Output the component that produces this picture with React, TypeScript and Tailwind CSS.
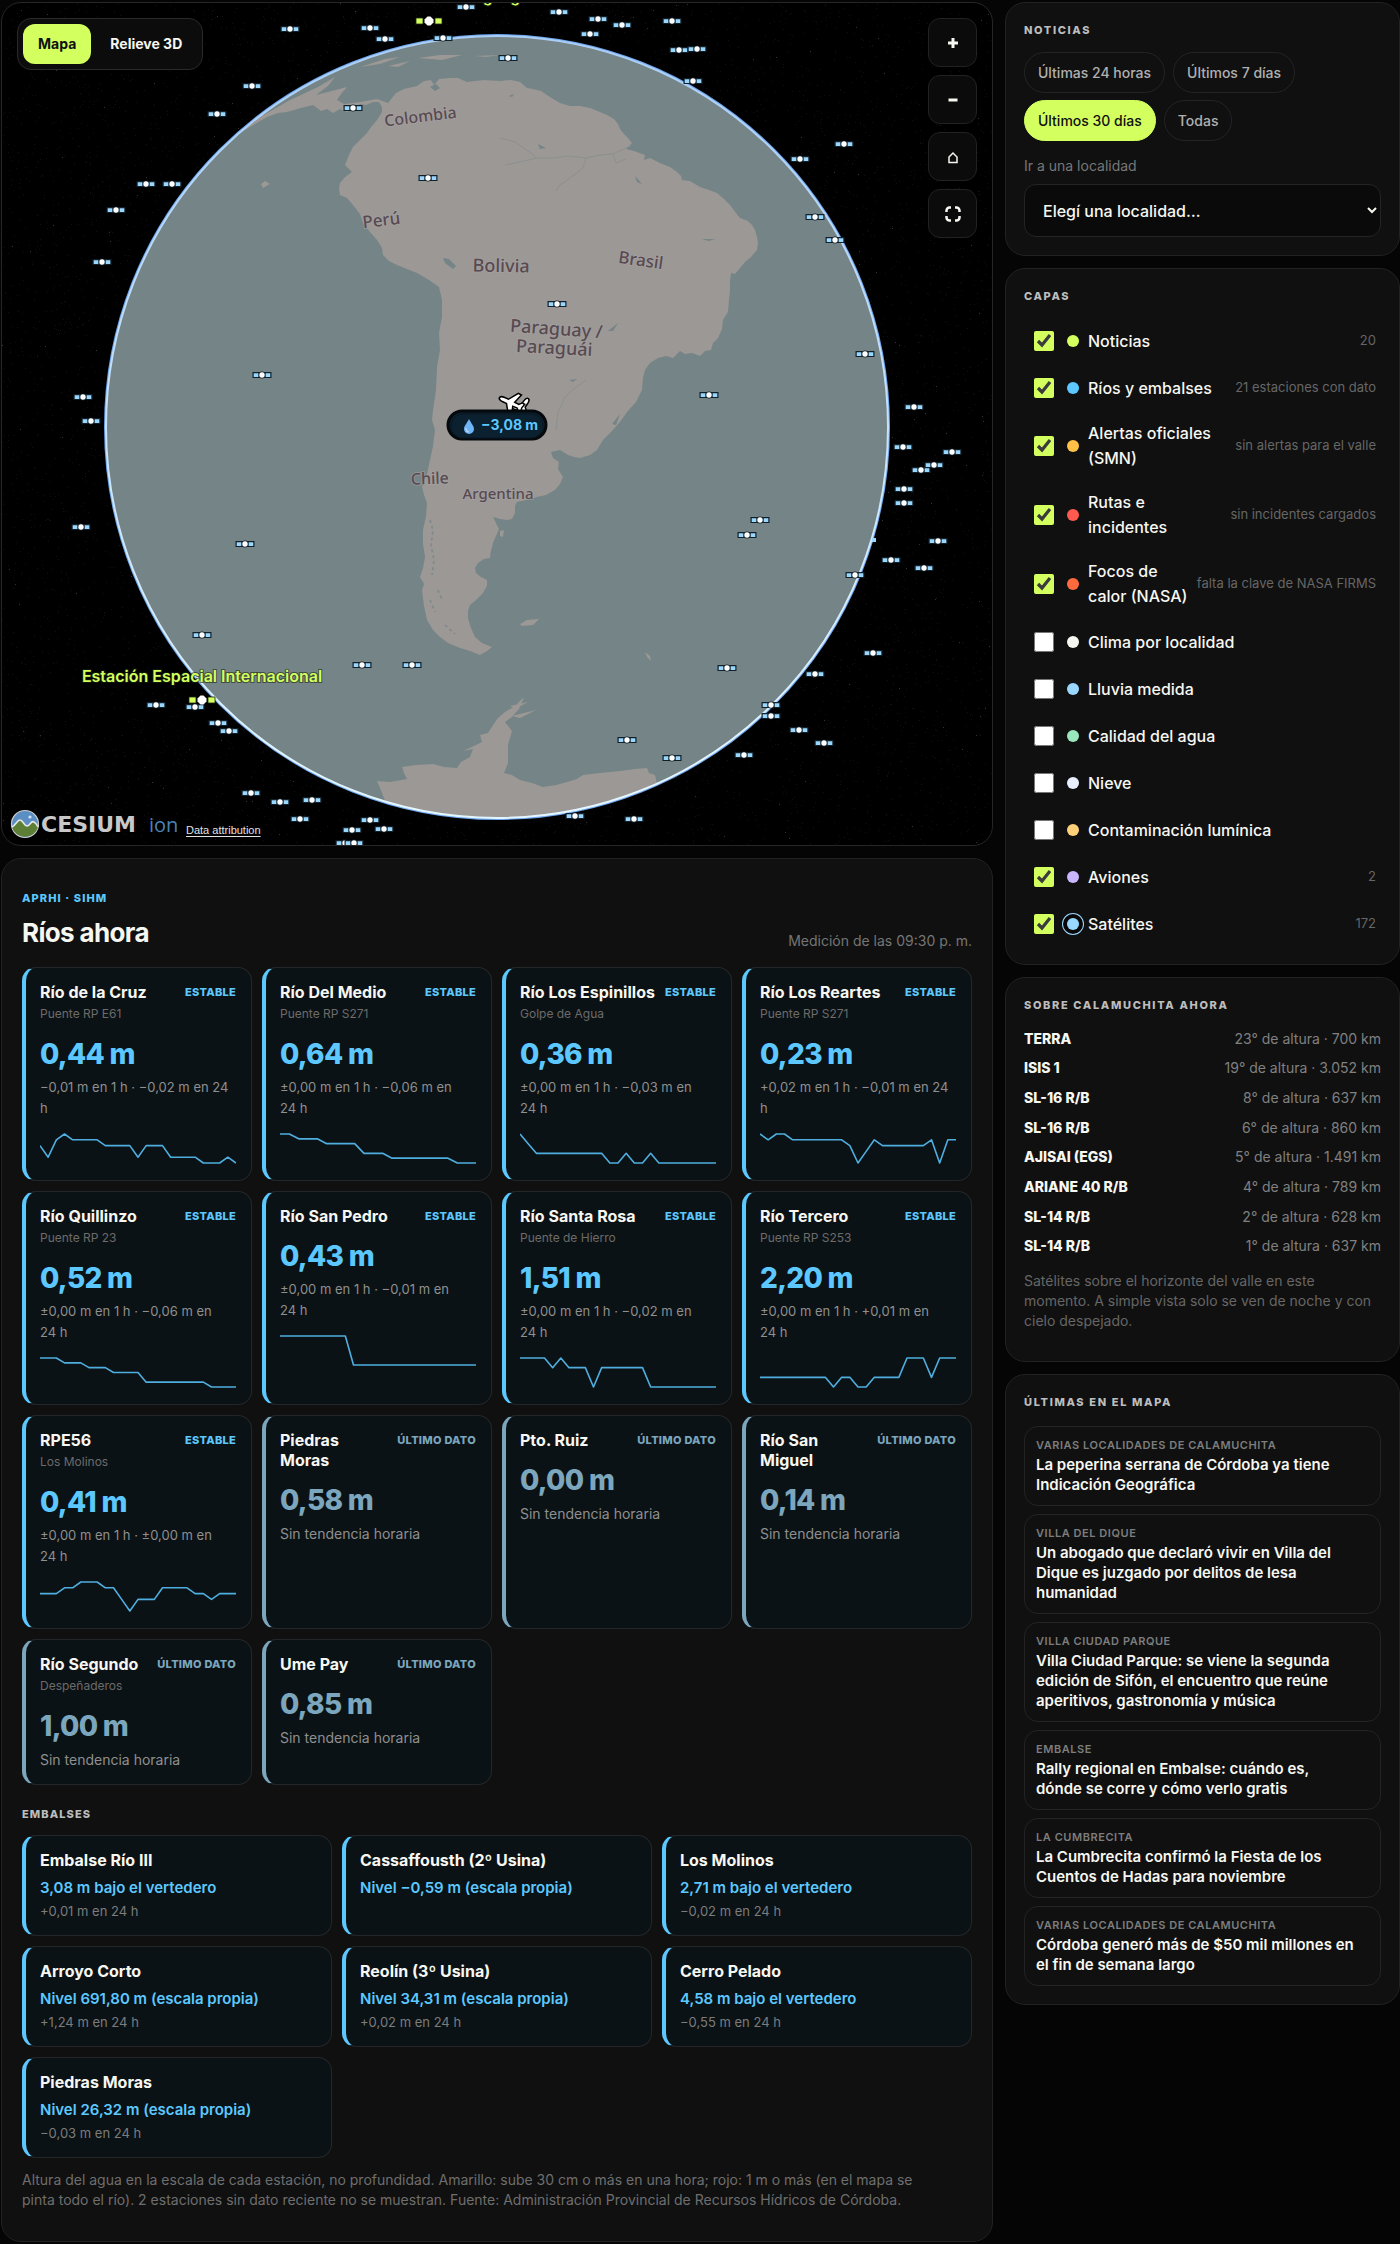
import { useState } from 'react'
import clsx from 'clsx'

const PERIODS = ['Últimas 24 horas', 'Últimos 7 días', 'Últimos 30 días', 'Todas']

const LAYERS = [
  { name: 'Noticias', dot: 'bg-[#d3ff5f]', note: '20', on: true },
  { name: 'Ríos y embalses', dot: 'bg-[#5cc8ff]', note: '21 estaciones con dato', on: true },
  { name: 'Alertas oficiales\n(SMN)', dot: 'bg-[#ffc247]', note: 'sin alertas para el valle', on: true },
  { name: 'Rutas e\nincidentes', dot: 'bg-[#ff5a4f]', note: 'sin incidentes cargados', on: true },
  { name: 'Focos de\ncalor (NASA)', dot: 'bg-[#ff6b3d]', note: 'falta la clave de NASA FIRMS', on: true },
  { name: 'Clima por localidad', dot: 'bg-[#f7f7f2]', note: '', on: false },
  { name: 'Lluvia medida', dot: 'bg-[#9ad7ff]', note: '', on: false },
  { name: 'Calidad del agua', dot: 'bg-[#9be7bd]', note: '', on: false },
  { name: 'Nieve', dot: 'bg-[#e8f0ff]', note: '', on: false },
  { name: 'Contaminación lumínica', dot: 'bg-[#ffd07a]', note: '', on: false },
  { name: 'Aviones', dot: 'bg-[#c9b6ff]', note: '2', on: true },
  { name: 'Satélites', dot: 'bg-[#9ad7ff] ring-1 ring-[#9ad7ff] ring-offset-4 ring-offset-[#080808]', note: '172', on: true },
]

const OVERHEAD = [
  ['TERRA', '23° de altura · 700 km'],
  ['ISIS 1', '19° de altura · 3.052 km'],
  ['SL-16 R/B', '8° de altura · 637 km'],
  ['SL-16 R/B', '6° de altura · 860 km'],
  ['AJISAI (EGS)', '5° de altura · 1.491 km'],
  ['ARIANE 40 R/B', '4° de altura · 789 km'],
  ['SL-14 R/B', '2° de altura · 628 km'],
  ['SL-14 R/B', '1° de altura · 637 km'],
]

const NEWS = [
  ['Varias localidades de Calamuchita', 'La peperina serrana de Córdoba ya tiene\nIndicación Geográfica'],
  ['Villa del Dique', 'Un abogado que declaró vivir en Villa del\nDique es juzgado por delitos de lesa\nhumanidad'],
  ['Villa Ciudad Parque', 'Villa Ciudad Parque: se viene la segunda\nedición de Sifón, el encuentro que reúne\naperitivos, gastronomía y música'],
  ['Embalse', 'Rally regional en Embalse: cuándo es,\ndónde se corre y cómo verlo gratis'],
  ['La Cumbrecita', 'La Cumbrecita confirmó la Fiesta de los\nCuentos de Hadas para noviembre'],
  ['Varias localidades de Calamuchita', 'Córdoba generó más de $50 mil millones en\nel fin de semana largo'],
]

type River = { name: string; place?: string; level: string; trend?: string; series?: number[] }

const RIVERS: River[] = [
  { name: 'Río de la Cruz', place: 'Puente RP E61', level: '0,44', trend: '−0,01 m en 1 h · −0,02 m en 24\nh', series: [2, 4, 1, 0, 1, 1, 1, 1, 2, 2, 2, 2, 4, 2, 2, 2, 4, 4, 4, 4, 5, 5, 5, 4, 5] },
  { name: 'Río Del Medio', place: 'Puente RP S271', level: '0,64', trend: '±0,00 m en 1 h · −0,06 m en\n24 h', series: [0, 0, 1, 1, 1, 2, 2, 2, 2, 4, 4, 4, 5, 5, 5, 5, 5, 5, 5, 6, 6, 6] },
  { name: 'Río Los Espinillos', place: 'Golpe de Agua', level: '0,36', trend: '±0,00 m en 1 h · −0,03 m en\n24 h', series: [0, 1, 2, 2, 2, 2, 2, 2, 2, 2, 2, 3, 3, 2, 3, 3, 2, 3, 3, 3, 3, 3, 3, 3, 3] },
  { name: 'Río Los Reartes', place: 'Puente RP S271', level: '0,23', trend: '+0,02 m en 1 h · −0,01 m en 24\nh', series: [0, 1, 0, 0, 1, 1, 1, 1, 1, 1, 1, 2, 5, 3, 1, 2, 2, 2, 2, 2, 2, 1, 5, 1, 1] },
  { name: 'Río Quillinzo', place: 'Puente RP 23', level: '0,52', trend: '±0,00 m en 1 h · −0,06 m en\n24 h', series: [0, 0, 0, 1, 1, 1, 2, 2, 2, 3, 3, 3, 3, 5, 5, 5, 5, 5, 5, 5, 5, 6, 6, 6, 6] },
  { name: 'Río San Pedro', level: '0,43', trend: '±0,00 m en 1 h · −0,01 m en\n24 h', series: [0, 0, 0, 0, 0, 0, 0, 0, 0, 1, 1, 1, 1, 1, 1, 1, 1, 1, 1, 1, 1, 1, 1, 1, 1] },
  { name: 'Río Santa Rosa', place: 'Puente de Hierro', level: '1,51', trend: '±0,00 m en 1 h · −0,02 m en\n24 h', series: [0, 0, 0, 0, 1, 0, 1, 1, 1, 3, 1, 1, 1, 1, 1, 1, 3, 3, 3, 3, 3, 3, 3, 3, 3] },
  { name: 'Río Tercero', place: 'Puente RP S253', level: '2,20', trend: '±0,00 m en 1 h · +0,01 m en\n24 h', series: [2, 2, 2, 2, 2, 2, 2, 2, 2, 3, 2, 2, 3, 3, 2, 2, 2, 2, 0, 0, 0, 2, 0, 0, 0] },
  { name: 'RPE56', place: 'Los Molinos', level: '0,41', trend: '±0,00 m en 1 h · ±0,00 m en\n24 h', series: [2, 2, 2, 1, 1, 0, 0, 0, 1, 1, 3, 5, 3, 3, 3, 1, 1, 1, 1, 2, 2, 3, 2, 2, 2] },
  { name: 'Piedras\nMoras', level: '0,58' },
  { name: 'Pto. Ruiz', level: '0,00' },
  { name: 'Río San\nMiguel', level: '0,14' },
  { name: 'Río Segundo', place: 'Despeñaderos', level: '1,00' },
  { name: 'Ume Pay', level: '0,85' },
]

const RESERVOIRS = [
  ['Embalse Río III', '3,08 m bajo el vertedero', '+0,01 m en 24 h'],
  ['Cassaffousth (2º Usina)', 'Nivel −0,59 m (escala propia)', ''],
  ['Los Molinos', '2,71 m bajo el vertedero', '−0,02 m en 24 h'],
  ['Arroyo Corto', 'Nivel 691,80 m (escala propia)', '+1,24 m en 24 h'],
  ['Reolín (3º Usina)', 'Nivel 34,31 m (escala propia)', '+0,02 m en 24 h'],
  ['Cerro Pelado', '4,58 m bajo el vertedero', '−0,55 m en 24 h'],
  ['Piedras Moras', 'Nivel 26,32 m (escala propia)', '−0,03 m en 24 h'],
]

const SATELLITES = [
  [290, 29], [370, 28], [385, 39], [466, 7], [443, 38], [252, 86], [217, 114], [146, 184], [172, 184],
  [116, 210], [102, 262], [353, 108], [428, 178], [262, 375], [83, 397], [91, 421], [508, 58], [559, 12],
  [598, 19], [622, 25], [590, 34], [672, 21], [679, 50], [697, 49], [693, 81], [844, 144], [800, 159],
  [815, 217], [835, 240], [557, 304], [865, 354], [709, 395], [914, 407], [81, 527], [245, 544], [202, 635],
  [362, 665], [412, 665], [156, 705], [195, 707], [218, 723], [229, 731], [251, 793], [280, 802], [312, 800],
  [300, 819], [352, 830], [370, 820], [384, 829], [345, 843], [354, 843], [903, 447], [952, 452], [934, 465],
  [921, 470], [904, 489], [904, 503], [760, 520], [747, 535], [938, 541], [891, 560], [924, 568], [855, 575],
  [873, 653], [727, 668], [815, 674], [771, 705], [771, 716], [799, 730], [824, 743], [627, 740], [672, 758],
  [744, 755], [575, 816], [634, 819],
]

const COUNTRIES = [
  { name: 'Colombia', x: 421, y: 122, size: 16, turn: -7 },
  { name: 'Perú', x: 382, y: 226, size: 17, turn: -7 },
  { name: 'Bolivia', x: 501, y: 272, size: 18, turn: 1 },
  { name: 'Brasil', x: 640, y: 266, size: 17, turn: 8 },
  { name: 'Paraguay /', x: 556, y: 335, size: 18, turn: 4 },
  { name: 'Paraguái', x: 554, y: 354, size: 18, turn: 3 },
  { name: 'Chile', x: 430, y: 484, size: 16, turn: -2 },
  { name: 'Argentina', x: 498, y: 499, size: 15, turn: 0 },
]

const SOUTH_AMERICA =
  'M240 133L262 116 290 100 318 87 335 77 328 86 316 95 347 87 341 94 337 100 344 104 360 102 377 99 388 103 396 93 404 89 417 86 424 81 431 80 434 85 439 79 450 78 458 78 467 82 484 80 500 81 511 80 520 82 527 88 533 89 541 91 550 97 560 103 570 106 580 106 590 108 600 112 607 115 614 119 618 124 620 129 623 133 628 138 632 143 626 149 634 151 645 155 644 160 650 158 660 163 670 167 677 172 681 176 682 180 690 181 700 187 709 190 717 193 724 199 730 205 736 213 740 218 748 221 752 225 755 230 757 237 758 243 757 250 751 257 745 262 740 268 735 274 731 273 730 282 730 291 729 300 728 312 723 320 722 329 718 338 713 343 711 350 705 351 700 356 692 353 685 354 680 351 673 358 666 356 658 358 650 363 645 370 643 378 642 390 636 402 627 412 620 422 611 432 603 440 597 450 590 455 580 458 574 457 568 455 560 450 551 452 553 458 559 462 558 469 563 477 560 484 555 490 546 495 537 497 526 500 517 502 515 506 515 513 512 519 507 520 500 519 493 517 496 523 499 529 496 536 493 543 491 551 490 558 484 559 478 563 475 568 476 573 481 577 487 580 487 586 483 593 476 600 470 605 468 611 468 618 471 628 475 637 482 643 492 647 487 651 480 655 470 651 460 648 448 643 440 637 433 630 427 620 424 606 422 590 424 584 420 577 423 568 425 557 423 544 423 530 426 516 427 503 424 495 422 487 427 474 430 460 433 446 435 430 432 420 433 410 436 390 437 367 440 350 439 333 442 317 442 300 439 287 429 280 417 273 407 269 397 265 389 261 383 255 382 248 377 240 370 232 363 223 360 214 353 205 347 198 340 195 339 189 340 183 345 177 352 172 345 165 349 155 353 147 361 139 367 133 371 127 377 120 382 112 382 107 379 102 373 102 366 105 360 104 355 108 347 112 340 109 333 113 327 109 321 111 313 105 301 108 287 112 278 113 267 117 255 124Z'

const ANTARCTICA =
  'M377 781L390 782 407 779 404 773 402 767 416 765 433 764 444 767 457 768 461 762 470 757 473 749 463 751 476 745 482 742 480 735 488 733 493 725 498 718 505 712 515 706 524 697 519 709 512 717 505 722 512 731 508 745 508 763 504 773 512 775 520 780 532 783 543 787 556 785 567 782 577 779 583 775 600 773 620 771 635 769 647 768 649 773 655 775 670 840 400 840 382 793Z'

const RIVER_LINES =
  'M500 138L515 142 528 151 537 158 552 158 568 156 586 158 600 155 613 154 624 149 631 145M505 165L520 162 537 158M586 158L583 168 570 178 560 185 556 191M613 154L616 163 626 159M586 380L575 388 565 397 558 412 556 430'

// Cheap deterministic noise for the star field
function starField(count: number, seed: number) {
  let s = seed
  const next = () => (s = (s * 16807) % 2147483647) / 2147483647
  let d = ''
  for (let i = 0; i < count; i++) {
    d += `M${Math.round(next() * 990)} ${Math.round(next() * 842)}h1`
  }
  return d
}

const FAINT_STARS = starField(9000, 7)
const BRIGHT_STARS = starField(300, 91)

function Satellite({ x, y, station }: { x: number; y: number; station?: boolean }) {
  return station ? (
    <g transform={`translate(${x} ${y})`}>
      <path d="M-13 -3h7v6h-7zM6 -3h7v6h-7z" fill="#d3ff5f" stroke="#1c2610" strokeWidth=".8" />
      <path d="M-1.5 -4.5h3l3 3v3l-3 3h-3l-3-3v-3z" fill="#fff" />
    </g>
  ) : (
    <g transform={`translate(${x} ${y})`}>
      <path d="M-9.5 -3h19v6h-19z" fill="#12202a" />
      <circle r="3.6" fill="#12202a" />
      <path d="M-8.3 -1.8h4.6v3.8h-4.6zM3.7 -1.8h4.6v3.8h-4.6z" fill="#9ad7ff" />
      <circle r="2.7" fill="#fff" />
    </g>
  )
}

function Plane({ x, y, turn }: { x: number; y: number; turn: number }) {
  return (
    <path
      transform={`translate(${x} ${y}) rotate(${turn})`}
      d="M0 -12C1 -12 1.6 -10 1.6 -8L1.6 -3.5 11 3 11 5 1.6 2 1.2 8 4 10.5V12L0 11 -4 12V10.5L-1.2 8 -1.6 2 -11 5V3L-1.6 -3.5V-8C-1.6 -10 -1 -12 0 -12Z"
      fill="#fff"
      stroke="#000"
      strokeWidth="3"
      paintOrder="stroke"
    />
  )
}

function Globe() {
  return (
    <svg viewBox="2 3 990 842" preserveAspectRatio="xMidYMid slice" className="absolute inset-0 size-full" aria-label="Globo">
      <defs>
        <clipPath id="disc">
          <circle cx="497" cy="427" r="391" />
        </clipPath>
        <linearGradient id="rim" x1="0" y1="0" x2="0" y2="1">
          <stop offset="0" stopColor="#a9cdf5" />
          <stop offset="1" stopColor="#e4f6ff" />
        </linearGradient>
      </defs>
      <g transform="translate(2 3)" shapeRendering="crispEdges">
        <path d={FAINT_STARS} stroke="#101010" />
        <path d={BRIGHT_STARS} stroke="#343434" />
      </g>
      <circle cx="497" cy="427" r="391" fill="#758486" />
      <g clipPath="url(#disc)">
        <path d={SOUTH_AMERICA} fill="#9b9895" />
        <path d={ANTARCTICA} fill="#9b9895" />
        <path
          d="M360 67L385 59 400 57 380 64ZM388 66L410 61 398 67ZM418 58L440 55 462 55 442 60ZM474 56L500 55 486 57ZM520 624L527 620 539 619 533 625 522 626ZM645 652L650 656 651 661 647 657ZM261 184L265 181 270 184 263 188ZM510 706L528 702 515 709ZM512 716L536 710 520 718ZM500 531L504 530 503 537 500 536Z"
          fill="#9b9895"
        />
        <path d={RIVER_LINES} fill="none" stroke="#8c9090" strokeWidth="1" />
        <path
          d="M443 258L449 259 456 266 453 269 445 263ZM430 87L436 84 440 88 435 91ZM538 144L546 148 540 149ZM635 176L642 184 637 182ZM509 96L514 94 512 97ZM608 331L618 323 613 331ZM569 380L577 379 573 382ZM612 424L620 414 616 425ZM702 239L715 239 709 241Z"
          fill="#758486"
        />
        <path d="M430 520L433 530 431 545 434 560 432 575M438 590L442 600M445 625L455 634M430 600L435 612" fill="none" stroke="#7d8889" strokeWidth="1.5" strokeDasharray="3 3" />
      </g>
      <circle cx="497" cy="427" r="392" fill="none" stroke="#6ba4ec" strokeWidth="2" />
      <circle cx="497" cy="427" r="391" fill="none" stroke="url(#rim)" strokeWidth="2" />

      <g className="font-['Noto_Sans',sans-serif] font-medium" fill="#574a51" stroke="#aaa3a5" strokeWidth="2" strokeOpacity=".5" paintOrder="stroke" textAnchor="middle">
        {COUNTRIES.map(c => (
          <text key={c.name} x={c.x} y={c.y} fontSize={c.size} transform={`rotate(${c.turn} ${c.x} ${c.y})`}>
            {c.name}
          </text>
        ))}
      </g>

      {SATELLITES.map(([x, y], i) => (
        <Satellite key={i} x={x} y={y} />
      ))}
      <path d="M872 538h4v4h-4z" fill="#9ad7ff" />
      <Satellite x={429} y={21} station />
      <Satellite x={202} y={700} station />

      <g fill="#d3ff5f" stroke="#1c2610" strokeWidth="2" strokeOpacity=".6" paintOrder="stroke" className="font-semibold">
        <text x="202" y="682" fontSize="16" textAnchor="middle">Estación Espacial Internacional</text>
        <text x="520" y="2" fontSize="15" textAnchor="end">Tiangong</text>
      </g>

      <Plane x={521} y={409} turn={35} />
      <Plane x={511} y={403} turn={-65} />
      <rect x="448" y="411" width="98" height="28" rx="14" fill="#0b1e2a" stroke="#05090c" strokeWidth="3" />
      <rect x="451" y="414" width="92" height="24" rx="12" fill="#0b2130" stroke="#081722" />
      <path d="M469 419C471 423 474 426 474 429A5 5 0 0 1 464 429C464 426 467 423 469 419Z" fill="#6fb4f5" />
      <path d="M466 428A3 4 0 0 0 469 432" fill="none" stroke="#b9dcff" strokeWidth="1.2" />
      <text x="481" y="430" fontSize="14" className="font-bold" fill="#5cc8ff">−3,08 m</text>
    </svg>
  )
}

function CesiumCredit() {
  return (
    <div className="absolute bottom-1.5 left-2 flex items-end gap-1.5">
      <svg width="170" height="30" viewBox="0 0 170 30" aria-label="Cesium ion">
        <circle cx="15" cy="15" r="13.5" fill="#5b8fc4" stroke="#c9c9c9" strokeWidth="1.2" />
        <path d="M2 18C6 16 7 11 10 11S14 17 17 17 21 11 24 13C26 14 27 16 28 18A13.5 13.5 0 0 1 2 18Z" fill="#5d7f35" />
        <path d="M2 18C6 16 7 11 10 11S14 17 17 17 21 11 24 13C26 14 27 16 28 18" fill="none" stroke="#e6e6e6" strokeWidth="1.6" />
        <circle cx="20" cy="8" r="1.6" fill="#cfe3f7" />
        <text x="31" y="23" fontSize="22" className="font-['DejaVu_Sans',sans-serif] font-bold" fill="#c8c8c8">CESIUM</text>
        <text x="139" y="23" fontSize="20" className="font-['Open_Sans',sans-serif]" fill="#4c83b8">ion</text>
      </svg>
      <a href="#attribution" className="font-['Liberation_Sans',sans-serif] text-[11px] leading-[17px] text-[#e2e2e2] underline underline-offset-2">
        Data attribution
      </a>
    </div>
  )
}

const CONTROLS = [
  { label: 'Acercar', icon: <path d="M12 7v10M7 12h10" strokeWidth="3" /> },
  { label: 'Alejar', icon: <path d="M7.5 12h9" strokeWidth="3" /> },
  { label: 'Inicio', icon: <path d="M8 17.5V12L12 8 16 12V17.5Z" strokeWidth="1.5" /> },
  {
    label: 'Pantalla completa',
    icon: <path d="M5.5 10V8.5A3 3 0 0 1 8.5 5.5H10M14 5.5H15.5A3 3 0 0 1 18.5 8.5V10M18.5 14V15.5A3 3 0 0 1 15.5 18.5H14M10 18.5H8.5A3 3 0 0 1 5.5 15.5V14" strokeWidth="2.5" />,
  },
]

function MapPanel() {
  const [view, setView] = useState('Mapa')
  return (
    <section className="relative h-[844px] overflow-hidden rounded-[20px] border border-[#262626] bg-black">
      <Globe />
      <div className="absolute top-[15px] left-[15px] flex gap-1 rounded-[14px] border border-[#2a2a2a] bg-[#0c0c0c] p-[5px]">
        {['Mapa', 'Relieve 3D'].map(v => (
          <button
            key={v}
            onClick={() => setView(v)}
            className={clsx('h-10 rounded-xl px-[15px] text-sm font-bold', v === view ? 'bg-[#d3ff5f] text-[#101010]' : 'text-[#f7f7f2]')}
          >
            {v}
          </button>
        ))}
      </div>
      <div className="absolute top-[15px] right-[15px] flex flex-col gap-2">
        {CONTROLS.map(c => (
          <button key={c.label} aria-label={c.label} className="grid size-[49px] place-items-center rounded-xl border border-[#222] bg-[#0b0b0b] text-[#f7f7f2]">
            <svg width="24" height="24" viewBox="0 0 24 24" fill="none" stroke="currentColor">
              {c.icon}
            </svg>
          </button>
        ))}
      </div>
      <CesiumCredit />
    </section>
  )
}

function Sparkline({ series }: { series: number[] }) {
  const max = Math.max(...series)
  const points = series.map((v, i) => `${(i * 196) / (series.length - 1)},${3 + (v * 29) / max}`).join(' ')
  return (
    <svg viewBox="0 0 196 35" preserveAspectRatio="none" className="mt-3 h-[35px] w-full">
      <polyline points={points} fill="none" stroke="#4faee0" strokeWidth="1.6" strokeLinejoin="round" />
    </svg>
  )
}

function RiverCard({ river }: { river: River }) {
  const live = Boolean(river.series)
  return (
    <article className={clsx('rounded-[14px] border border-l-4 border-[#242729] bg-[#0b1215] py-3.5 pr-[15px] pl-3.5', live ? 'border-l-[#5cc8ff]' : 'border-l-[#7ba6bd]')}>
      <div className="flex items-start justify-between gap-1">
        <h3 className="text-base leading-5 font-bold whitespace-pre text-[#f7f7f2]">{river.name}</h3>
        <span className={clsx('text-[11px] leading-5 font-extrabold tracking-wide whitespace-nowrap', live ? 'text-[#5cc8ff]' : 'text-[#7ba6bd]')}>
          {live ? 'ESTABLE' : 'ÚLTIMO DATO'}
        </span>
      </div>
      {river.place && <p className="mt-0.5 text-xs leading-5 text-[#6b6b6b]">{river.place}</p>}
      <p className={clsx('mt-4 text-[28px] leading-7 font-extrabold tracking-tight', live ? 'text-[#5cc8ff]' : 'text-[#7ba6bd]')}>{river.level} m</p>
      {river.trend ? (
        <p className="mt-[9px] text-[13px] leading-[21px] whitespace-pre-line text-[#8f8f8f]">{river.trend}</p>
      ) : (
        <p className="mt-[9px] text-sm leading-[21px] text-[#8f8f8f]">Sin tendencia horaria</p>
      )}
      {river.series && <Sparkline series={river.series} />}
    </article>
  )
}

function RiversPanel() {
  return (
    <section className="rounded-[20px] border border-[#222] bg-[#101010] px-5 pt-[30px] pb-[31px]">
      <p className="text-[11px] leading-[18px] font-extrabold tracking-widest text-[#5cc8ff]">APRHI · SIHM</p>
      <div className="mt-3 mb-5 flex items-end justify-between">
        <h2 className="text-[26px] leading-7 font-bold tracking-tight text-[#f7f7f2]">Ríos ahora</h2>
        <p className="text-sm leading-3 text-[#757575]">Medición de las 09:30 p. m.</p>
      </div>
      <div className="grid grid-cols-4 gap-2.5">
        {RIVERS.map(r => (
          <RiverCard key={r.name} river={r} />
        ))}
      </div>
      <h3 className="mt-5 mb-3 text-[11px] leading-[18px] font-extrabold tracking-widest text-[#bdbdbd]">EMBALSES</h3>
      <div className="grid grid-cols-3 gap-2.5">
        {RESERVOIRS.map(([name, level, change]) => (
          <article key={name} className="rounded-[14px] border border-l-4 border-[#242729] border-l-[#5cc8ff] bg-[#0b1215] px-3.5 py-3.5">
            <h4 className="text-base leading-5 font-bold text-[#f7f7f2]">{name}</h4>
            <p className="mt-2 text-[15px] leading-5 font-semibold text-[#5cc8ff]">{level}</p>
            {change && <p className="mt-1 text-[13px] leading-[19px] text-[#7c7c7c]">{change}</p>}
          </article>
        ))}
      </div>
      <p className="mt-3 text-sm leading-5 text-[#6e6e6e]">
        Altura del agua en la escala de cada estación, no profundidad. Amarillo: sube 30 cm o más en una hora; rojo: 1 m o más (en el mapa se
        <br />
        pinta todo el río). 2 estaciones sin dato reciente no se muestran. Fuente: Administración Provincial de Recursos Hídricos de Córdoba.
      </p>
    </section>
  )
}

function SidePanel({ title, children }: { title: string; children: React.ReactNode }) {
  return (
    <section className="rounded-[20px] border border-[#222] bg-[#101010] p-[18px]">
      <h2 className="text-[11px] leading-[18px] font-extrabold tracking-[0.15em] text-[#bdbdbd]">{title}</h2>
      {children}
    </section>
  )
}

export default function App() {
  const [period, setPeriod] = useState('Últimos 30 días')
  return (
    <div className="min-h-screen bg-[#050505] pt-0.5 pb-px pl-px font-[Inter,sans-serif] text-[#f7f7f2]">
      <div className="grid grid-cols-[minmax(0,1fr)_395px] items-start gap-3">
        <main className="flex flex-col gap-3">
          <MapPanel />
          <RiversPanel />
        </main>

        <aside className="flex flex-col gap-3">
          <SidePanel title="NOTICIAS">
            <div className="mt-[13px] flex flex-wrap gap-x-2 gap-y-[7px]">
              {PERIODS.map(p => (
                <button
                  key={p}
                  onClick={() => setPeriod(p)}
                  className={clsx(
                    'h-[41px] rounded-full border px-[13px] text-sm font-medium',
                    p === period ? 'border-[#d3ff5f] bg-[#d3ff5f] text-[#101010]' : 'border-[#242424] text-[#b0b0b0]'
                  )}
                >
                  {p}
                </button>
              ))}
            </div>
            <label htmlFor="town" className="mt-[15px] mb-2 block text-sm leading-5 text-[#777]">
              Ir a una localidad
            </label>
            <select id="town" className="h-[53px] w-full rounded-xl border border-[#242424] bg-[#0a0a0a] pl-3.5 text-base font-medium text-[#f7f7f2]">
              <option>Elegí una localidad…</option>
            </select>
          </SidePanel>

          <SidePanel title="CAPAS">
            <ul className="mt-3.5 flex flex-col gap-[3px]">
              {LAYERS.map(l => (
                <li key={l.name}>
                  <label className="flex min-h-11 items-center gap-[9px] py-2 pr-[5px] pl-2.5">
                    <input type="checkbox" defaultChecked={l.on} className="mr-1 size-5 shrink-0 accent-[#d3ff5f]" />
                    <span className={clsx('size-3 shrink-0 rounded-full', l.dot)} />
                    <span className="flex-1 text-base leading-[25px] font-medium whitespace-pre">{l.name}</span>
                    <span className="text-[13px] whitespace-nowrap text-[#666]">{l.note}</span>
                  </label>
                </li>
              ))}
            </ul>
          </SidePanel>

          <SidePanel title="SOBRE CALAMUCHITA AHORA">
            <ul className="mt-2.5 grid h-[237px] auto-rows-fr items-center">
              {OVERHEAD.map(([name, where], i) => (
                <li key={i} className="flex items-center justify-between">
                  <b className="text-sm font-extrabold">{name}</b>
                  <span className="text-sm text-[#808080]">{where}</span>
                </li>
              ))}
            </ul>
            <p className="mt-2.5 mb-3 text-sm leading-5 text-[#666]">
              Satélites sobre el horizonte del valle en este
              <br />
              momento. A simple vista solo se ven de noche y con
              <br />
              cielo despejado.
            </p>
          </SidePanel>

          <SidePanel title="ÚLTIMAS EN EL MAPA">
            <div className="mt-[15px] flex flex-col gap-2">
              {NEWS.map(([place, title]) => (
                <a key={title} href="#nota" className="rounded-[14px] border border-[#232323] px-[11px] py-2.5">
                  <span className="block text-[11px] leading-4 font-semibold tracking-wider text-[#7d7d7d] uppercase">{place}</span>
                  <span className="mt-0.5 block text-[15px] leading-5 font-semibold whitespace-pre">{title}</span>
                </a>
              ))}
            </div>
          </SidePanel>
        </aside>
      </div>
    </div>
  )
}
